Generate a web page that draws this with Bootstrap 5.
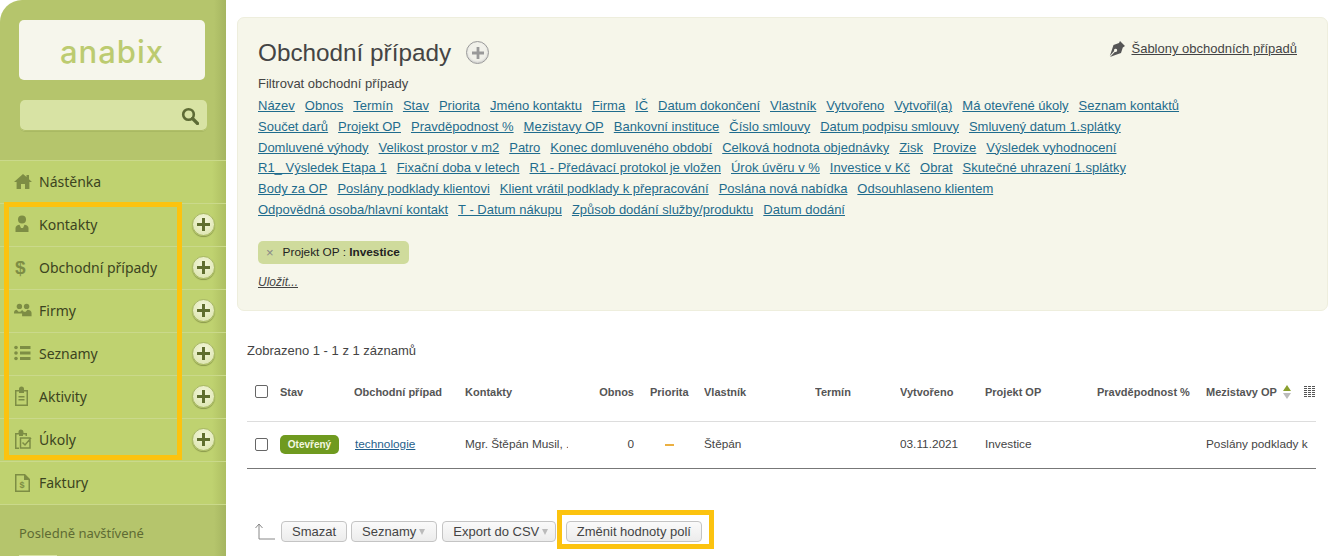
<!DOCTYPE html>
<html lang="cs"><head><meta charset="utf-8"><title>Obchodní případy</title>
<link rel="stylesheet" href="https://cdn.jsdelivr.net/npm/bootstrap@5.3.0/dist/css/bootstrap.min.css">
<style>
html,body{height:556px;overflow:hidden;background:#fff}
body{font-family:"Liberation Sans",Arial,sans-serif;font-size:12.5px;color:#444}
.shell{height:556px}
.side{width:226px;flex:none;background:linear-gradient(90deg,#b5c56c 0,#b5c56c 214px,#a5b560 226px);border-top-left-radius:22px;padding-top:20px;overflow:hidden}
.brand{margin:0 21px 0 19px;height:60px;background:#f6f6ec;border-radius:5px}
.brand span{font-family:"Inter",sans-serif;font-weight:500;font-size:31px;letter-spacing:1px;color:#bccb70;line-height:1;margin-top:2px}
.finder{margin:20px 19px 0 20px;height:31px;background:#d8e3a4;border-radius:5px;box-shadow:inset 0 -1px 0 #b0bf68,0 1px 0 #a9b963;padding-right:8px}
.menu{margin-top:29px;border-top:1px solid #cad98b;position:relative}
.mitem{height:43px;background:linear-gradient(90deg,#bfd270 0,#bfd270 212px,#aebf62 226px);border-bottom:1px solid #cad98b;padding:0 0 2px 14px;font-family:"Noto Sans",sans-serif;font-size:14px;color:#3c4420}
.mitem svg.ic{width:18px;height:20px;margin-right:7px;flex:none;fill:#7d8d44}
.mitem .lbl{flex:1}
.plus{width:23px;height:23px;border-radius:50%;background:radial-gradient(circle at 50% 35%,#f4f7dc,#d9e2a8);border:1px solid #a8b866;box-shadow:0 1px 1px #8b9a4c;margin-right:11px;flex:none}
.plus svg{width:13px;height:13px;fill:#5f6e2e}
.recent{padding:19px 0 0 19px;font-family:"Noto Sans",sans-serif;font-size:13px;line-height:18px;color:#5e6b33}
.thumb{width:38px;height:18px;background:#d8e3a4;margin-top:13px}
.hilite{position:absolute;border:5px solid #fcc30f;pointer-events:none}
.hl-a{left:4px;top:41px;width:178px;height:258px}
.hl-b{left:557px;top:510px;width:157px;height:39px}
.wrapmain{flex:1;min-width:0;padding:17px 1px 0 11px}
.panel{height:294px;background:#f6f6ea;border:1px solid #eeeedd;border-radius:7px;padding:19px 20px 0 20px}
.ptitle{font-size:24.3px;line-height:32px;color:#444;font-weight:400;margin:0}
.tplus{width:23px;height:23px;border-radius:50%;border:1px solid #999;background:#f1f1ea;margin-left:15px;box-shadow:inset 0 -1px 2px #ccc}
.tplus svg{width:12px;height:12px;fill:#999}
.tpl{font-size:13px;color:#444;text-decoration:underline;margin:2px 10px 0 0}
.tpl svg{width:17px;height:17px;fill:#555;margin-right:5px}
.flabel{font-size:13px;line-height:21px;margin:4px 0 1px;color:#444}
.fline{height:20.8px;line-height:21px;font-size:13px;white-space:nowrap;gap:10px}
.fline a{color:#1f6c8d}
.chip{margin-top:21px;height:23px;background:#cfdb9c;border-radius:5px;padding:1px 9px 0 8px;font-size:11.8px;color:#222;width:151px;white-space:nowrap}
.chip i{font-style:normal;color:#888;margin-right:9px;font-size:13px}
.saveit{margin-top:9px;font-size:12px;font-style:italic;color:#444;text-decoration:underline}
.count{margin:32px 0 0 10px;font-size:13px;line-height:16px}
.dtable{margin:4px 0 0 10px;width:1069px;table-layout:fixed;border-collapse:collapse}
.dtable th{font-size:11px;height:58px;font-weight:700;color:#555;padding:0;border-bottom:1px solid #ddd;white-space:nowrap;overflow:hidden}
.dtable td{font-size:11.8px;height:47px;padding:0;border-bottom:1px solid #777;color:#444;white-space:nowrap;overflow:hidden}
.cbx{width:13px;height:13px;border:1px solid #666;border-radius:2px;background:#fff;display:block;margin-left:8px}
.status{background:#6f9a1f;color:#f4f8e0;font-size:10px;font-weight:700;border-radius:5px;display:inline-block;width:59px;height:19px;line-height:19px;text-align:center}
.dtable td a{color:#1f5f8c;margin-left:1px}
.dash{display:block;width:9px;height:2px;background:#ebb042;margin-left:15px}
.clipped{display:block;overflow:hidden}
.sorter{margin-left:6px}
.actions{margin:52px 0 0 18px}
.arrowup{width:20px;height:17px;fill:none;stroke:#888;margin-right:6px}
.bt{height:21px;line-height:19px;padding:0 10px;font-size:13px;color:#444;background:linear-gradient(#fafafa,#ececec);border:1px solid #c4c4c4;border-radius:4px;white-space:nowrap;margin-right:4px}
.bt em{display:inline-block;width:0;height:0;border-style:solid;border-width:6px 3.5px 0;border-color:#bbb transparent transparent;margin-left:3px;vertical-align:1px}
.bt.sq{margin-right:5px;padding-right:11px}
.bt.sp{margin-right:10px;padding-right:6.5px}
</style></head><body>
<div class="shell d-flex">
<aside class="side">
 <div class="brand d-flex align-items-center justify-content-center"><span>anabix</span></div>
 <div class="finder d-flex align-items-center justify-content-end"><svg width="18" height="18" viewBox="0 0 18 18" fill="none" stroke="#5d6b35" stroke-width="2.6"><circle cx="7.5" cy="7.5" r="5.3"/><path d="M11.5 11.5 16.5 16.5" stroke-width="3.2" stroke-linecap="round"/></svg></div>
 <div class="menu">
  <div class="mitem d-flex align-items-center"><svg class="ic" viewBox="0 0 18 20"><path d="M9 3 0 11h2.600v7h4.400v-5h4v5h4.400v-7H18l-3-2.700V4h-2.500v2.100z"/></svg><span class="lbl">Nástěnka</span></div>
  <div class="mitem d-flex align-items-center"><svg class="ic" viewBox="0 0 18 20"><circle cx="8" cy="5.500" r="4"/><path d="M1.500 18v-4c0-2 2-3 4-3.200L7 14h2l1.500-3.200c2 .2 4 1.200 4 3.200v4z"/></svg><span class="lbl">Kontakty</span><span class="plus d-flex align-items-center justify-content-center"><svg viewBox="0 0 13 13"><path d="M5 0h3v5h5v3H8v5H5V8H0V5h5z"/></svg></span></div>
  <div class="mitem d-flex align-items-center"><svg class="ic" viewBox="0 0 18 20"><text x="1" y="17" font-family="Liberation Sans" font-weight="700" font-size="19">$</text></svg><span class="lbl">Obchodní případy</span><span class="plus d-flex align-items-center justify-content-center"><svg viewBox="0 0 13 13"><path d="M5 0h3v5h5v3H8v5H5V8H0V5h5z"/></svg></span></div>
  <div class="mitem d-flex align-items-center"><svg class="ic" viewBox="0 0 20 20"><circle cx="6" cy="6" r="3"/><circle cx="14" cy="6" r="3"/><path d="M0 15v-2c0-2 1.500-3 3-3.200L5 12h2l2-2 2 2h2l2-2.200c2 .2 4.500 1.200 4.500 3.200v4H9v-3H0z"/></svg><span class="lbl">Firmy</span><span class="plus d-flex align-items-center justify-content-center"><svg viewBox="0 0 13 13"><path d="M5 0h3v5h5v3H8v5H5V8H0V5h5z"/></svg></span></div>
  <div class="mitem d-flex align-items-center"><svg class="ic" viewBox="0 0 18 20"><circle cx="2" cy="4.500" r="1.800"/><circle cx="2" cy="10" r="1.800"/><circle cx="2" cy="15.500" r="1.800"/><path d="M6 3h10.500v3H6zM6 8.500h10.500v3H6zM6 14h10.500v3H6z"/></svg><span class="lbl">Seznamy</span><span class="plus d-flex align-items-center justify-content-center"><svg viewBox="0 0 13 13"><path d="M5 0h3v5h5v3H8v5H5V8H0V5h5z"/></svg></span></div>
  <div class="mitem d-flex align-items-center"><svg class="ic" viewBox="0 0 18 20"><path fill-rule="evenodd" d="M1 4h4V3a2.500 2.500 0 0 1 5 0v1h4v16H1zm1.500 1.500v13h10v-13H10v1.500H5V5.500zM4.500 10h6v1.500h-6zm0 3h6v1.500h-6z"/></svg><span class="lbl">Aktivity</span><span class="plus d-flex align-items-center justify-content-center"><svg viewBox="0 0 13 13"><path d="M5 0h3v5h5v3H8v5H5V8H0V5h5z"/></svg></span></div>
  <div class="mitem d-flex align-items-center"><svg class="ic" viewBox="0 0 18 20"><path fill-rule="evenodd" d="M1 4h3.500V3a2.500 2.500 0 0 1 5 0v1H13v3h-1.500V5.500H9V7H5V5.500H2.500v13H5V20H1z"/><path fill="none" stroke="#7d8d44" stroke-width="1.500" d="M6.500 9h9.500v10H6.500zM8.500 13.500l2.500 2.500 6-7"/></svg><span class="lbl">Úkoly</span><span class="plus d-flex align-items-center justify-content-center"><svg viewBox="0 0 13 13"><path d="M5 0h3v5h5v3H8v5H5V8H0V5h5z"/></svg></span></div>
  <div class="mitem d-flex align-items-center"><svg class="ic" viewBox="0 0 18 20"><path fill-rule="evenodd" d="M1 2h10l5 5v13H1zm1.500 1.500v15h12V8H10V3.500z"/><text x="5.500" y="15.500" font-family="Liberation Sans" font-weight="700" font-size="9">$</text></svg><span class="lbl">Faktury</span></div>
  <div class="hilite hl-a"></div>
 </div>
 <div class="recent">Posledně navštívené<div class="thumb"></div></div>
</aside>
<main class="wrapmain">
 <section class="panel">
  <div class="d-flex align-items-start">
   <h1 class="ptitle">Obchodní případy</h1>
   <span class="tplus d-flex align-items-center justify-content-center mt-1"><svg viewBox="0 0 13 13"><path d="M5 0h3v5h5v3H8v5H5V8H0V5h5z"/></svg></span>
   <span class="tpl ms-auto d-flex align-items-center"><svg viewBox="0 0 17 17"><path d="M11 1 16 6l-2.200 1.400L12 13l-7 2.500L1 17l5-5.200a1.600 1.600 0 1 0-.9-.9L.8 16 2.500 11 4.500 5 10 3z"/></svg><span>Šablony obchodních případů</span></span>
  </div>
  <div class="flabel">Filtrovat obchodní případy</div>
  <div class="fline d-flex"><a href="#">Název</a><a href="#">Obnos</a><a href="#">Termín</a><a href="#">Stav</a><a href="#">Priorita</a><a href="#">Jméno kontaktu</a><a href="#">Firma</a><a href="#">IČ</a><a href="#">Datum dokončení</a><a href="#">Vlastník</a><a href="#">Vytvořeno</a><a href="#">Vytvořil(a)</a><a href="#">Má otevřené úkoly</a><a href="#">Seznam kontaktů</a></div>
  <div class="fline d-flex"><a href="#">Součet darů</a><a href="#">Projekt OP</a><a href="#">Pravděpodnost %</a><a href="#">Mezistavy OP</a><a href="#">Bankovní instituce</a><a href="#">Číslo smlouvy</a><a href="#">Datum podpisu smlouvy</a><a href="#">Smluvený datum 1.splátky</a></div>
  <div class="fline d-flex"><a href="#">Domluvené výhody</a><a href="#">Velikost prostor v m2</a><a href="#">Patro</a><a href="#">Konec domluveného období</a><a href="#">Celková hodnota objednávky</a><a href="#">Zisk</a><a href="#">Provize</a><a href="#">Výsledek vyhodnocení</a></div>
  <div class="fline d-flex"><a href="#">R1_ Výsledek Etapa 1</a><a href="#">Fixační doba v letech</a><a href="#">R1 - Předávací protokol je vložen</a><a href="#">Úrok úvěru v %</a><a href="#">Investice v Kč</a><a href="#">Obrat</a><a href="#">Skutečné uhrazení 1.splátky</a></div>
  <div class="fline d-flex"><a href="#">Body za OP</a><a href="#">Poslány podklady klientovi</a><a href="#">Klient vrátil podklady k přepracování</a><a href="#">Poslána nová nabídka</a><a href="#">Odsouhlaseno klientem</a></div>
  <div class="fline d-flex"><a href="#">Odpovědná osoba/hlavní kontakt</a><a href="#">T - Datum nákupu</a><a href="#">Způsob dodání služby/produktu</a><a href="#">Datum dodání</a></div>
  <div class="chip d-flex align-items-center"><i>×</i><span>Projekt OP : <b>Investice</b></span></div>
  <div class="saveit">Uložit...</div>
 </section>
 <div class="count">Zobrazeno 1 - 1 z 1 záznamů</div>
 <table class="dtable">
  <colgroup><col style="width:33px"><col style="width:74px"><col style="width:111px"><col style="width:103px"><col style="width:66px"><col style="width:70px"><col style="width:111px"><col style="width:85px"><col style="width:85px"><col style="width:112px"><col style="width:109px"><col style="width:98px"><col style="width:12px"></colgroup>
  <thead><tr><th><span class="cbx"></span></th><th>Stav</th><th>Obchodní případ</th><th>Kontakty</th><th class="text-end">Obnos</th><th class="ps-3">Priorita</th><th>Vlastník</th><th>Termín</th><th>Vytvořeno</th><th>Projekt OP</th><th>Pravděpodnost %</th><th><span class="d-flex align-items-center">Mezistavy OP<svg class="sorter" width="8" height="14" viewBox="0 0 8 14"><path fill="#8aa02e" d="M4 0 8 6H0z"/><path fill="#bbb" d="M0 8h8l-4 6z"/></svg></span></th><th><svg class="d-block" width="12" height="12" viewBox="0 0 12 12" fill="#555"><path d="M0 0h3v1H0zM0 2h3v1H0zM0 4h3v1H0zM0 6h3v1H0zM0 8h3v1H0zM0 10h3v1H0zM4 0h3v1H4zM4 2h3v1H4zM4 4h3v1H4zM4 6h3v1H4zM4 8h3v1H4zM4 10h3v1H4zM8 0h3v1H8zM8 2h3v1H8zM8 4h3v1H8zM8 6h3v1H8zM8 8h3v1H8zM8 10h3v1H8z"/></svg></th></tr></thead>
  <tbody><tr><td><span class="cbx"></span></td><td><span class="status">Otevřený</span></td><td><a href="#">technologie</a></td><td><span class="clipped">Mgr. Štěpán Musil, .</span></td><td class="text-end">0</td><td class="ps-3"><span class="dash"></span></td><td>Štěpán</td><td></td><td>03.11.2021</td><td>Investice</td><td></td><td colspan="2"><span class="clipped">Poslány podklady k</span></td></tr></tbody>
 </table>
 <div class="actions d-flex align-items-center">
  <svg class="arrowup" viewBox="0 0 20 17"><path d="M4 16V1M.5 5 4 1l3.500 4M4 16h16"/></svg>
  <span class="bt">Smazat</span><span class="bt sq">Seznamy<em></em></span><span class="bt sp">Export do CSV<em></em></span><span class="bt">Změnit hodnoty polí</span>
 </div>
</main>
</div>
<div class="hilite hl-b"></div>
</body></html>
